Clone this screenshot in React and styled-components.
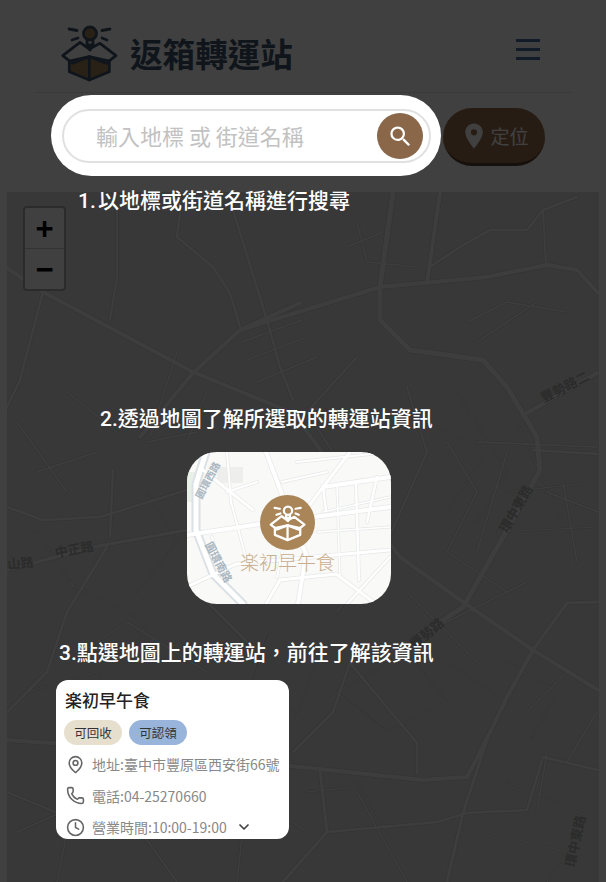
import React from 'react'
import styled, { createGlobalStyle } from 'styled-components'
import { Clock, ChevronDown, MapPin, Phone } from 'lucide-react'
import { MdLocationOn, MdSearch } from 'react-icons/md'

const GlobalStyle = createGlobalStyle`
    html, body {
        margin: 0;
        padding: 0;
        background: #fff;
        font-family: "Noto Sans CJK TC", "Noto Sans", sans-serif;
    }
    * { box-sizing: border-box; }
`

const Page = styled.div`
    position: relative;
    width: 606px;
    height: 882px;
    overflow: hidden;
    display: flex;
    flex-direction: column;
    background: #fff;
`
const Header = styled.header`
    height: 93px;
    margin: 0 34px;
    padding: 14px 32px 0 26px;
    flex-shrink: 0;
    display: flex;
    align-items: center;
    justify-content: space-between;
    border-bottom: 1px solid #e6e6e6;
`
const Brand = styled.div`
    display: flex;
    align-items: center;
    gap: 10px;
`
const BrandName = styled.span`
    font-size: 32.6px;
    font-weight: 700;
    color: #3c566c;
    line-height: 1;
`
const Burger = styled.div`
    width: 24px;
    margin-top: -7px;
    display: flex;
    flex-direction: column;
    gap: 6px;
    span {
        height: 3px;
        background: #4a6fa5;
    }
`
const SearchRow = styled.div`
    height: 99px;
    flex-shrink: 0;
    padding: 2px 0 0 51px;
    display: flex;
    align-items: flex-start;
    gap: 2px;
`
const SearchHighlight = styled.div`
    position: relative;
    z-index: 20;
    width: 390px;
    height: 81px;
    padding: 14px 10px 13px 11px;
    background: #fff;
    border-radius: 41px;
`
const SearchBox = styled.div`
    height: 54px;
    padding: 0 6px 0 32px;
    display: flex;
    align-items: center;
    border: 2px solid #e0e0e0;
    border-radius: 27px;
`
const SearchInput = styled.input`
    flex: 1;
    min-width: 0;
    height: 40px;
    padding: 0 0 2px;
    border: none;
    outline: none;
    background: none;
    font-family: inherit;
    font-size: 22px;
    &::placeholder { color: #c2c2c2; }
`
const SearchButton = styled.button`
    width: 46px;
    height: 46px;
    padding: 0;
    border: none;
    border-radius: 50%;
    background: #8a6748;
    color: #fff;
    display: flex;
    align-items: center;
    justify-content: center;
`
const LocateButton = styled.button`
    width: 102px;
    height: 58px;
    margin-top: 13px;
    padding: 0;
    border: none;
    border-bottom: 3px solid #5a4230;
    border-radius: 29px;
    background: #9a6f4e;
    color: #fff;
    font-family: inherit;
    font-size: 19px;
    display: flex;
    align-items: center;
    justify-content: center;
    gap: 1px;
`
const MapArea = styled.div`
    position: relative;
    flex: 1;
    margin: 0 7px;
    background: #e0e0de;
    overflow: hidden;
    svg { display: block; }
`
const ZoomControl = styled.div`
    position: absolute;
    left: 16px;
    top: 14px;
    width: 43px;
    height: 85px;
    background: #fff;
    border: 2px solid #aaa;
    border-radius: 4px;
    display: flex;
    flex-direction: column;
`
const ZoomButton = styled.div`
    flex: 1;
    display: flex;
    align-items: center;
    justify-content: center;
    font-family: "Liberation Sans", sans-serif;
    font-size: 31px;
    font-weight: 700;
    line-height: 1;
    color: #000;
    & + & { border-top: 1px solid #ccc; }
`
const Overlay = styled.div`
    position: absolute;
    inset: 0;
    z-index: 10;
    background: rgba(0, 0, 0, 0.75);
    display: flex;
    flex-direction: column;
    padding-top: 186px;
`
const StepTitle = styled.h2`
    margin: ${p => p.$top}px 0 0 ${p => p.$left}px;
    font-family: Roboto, "Noto Sans CJK TC", sans-serif;
    font-size: 21px;
    font-weight: 500;
    line-height: 30px;
    word-spacing: -3px;
    color: #fff;
    white-space: nowrap;
`
const Thumb = styled.div`
    position: relative;
    width: 204px;
    height: 152px;
    margin: 18px 0 0 187px;
    border-radius: 30px;
    overflow: hidden;
    background: #f9f9f7;
    svg.roads { display: block; }
`
const Marker = styled.div`
    position: absolute;
    left: 0;
    right: 3px;
    top: 43px;
    display: flex;
    flex-direction: column;
    align-items: center;
`
const MarkerBadge = styled.div`
    width: 55px;
    height: 55px;
    border-radius: 50%;
    background: #a98558;
    display: flex;
    align-items: center;
    justify-content: center;
`
const MarkerName = styled.span`
    margin-top: -2px;
    font-size: 19px;
    font-weight: 300;
    line-height: 28px;
    color: #c9ad8c;
`
const Card = styled.div`
    width: 233px;
    height: 159px;
    margin: 12px 0 0 56px;
    padding: 8px 9px 0 8px;
    background: #fff;
    border-radius: 12px;
    overflow: hidden;
`
const CardTitle = styled.div`
    font-size: 17px;
    font-weight: 500;
    line-height: 24px;
    color: #222;
    margin-left: 1px;
`
const Chips = styled.div`
    display: flex;
    gap: 7px;
    margin-top: 8px;
`
const Chip = styled.span`
    width: 58px;
    height: 25px;
    border-radius: 13px;
    background: ${p => p.$bg};
    font-size: 12.5px;
    line-height: 25px;
    text-align: center;
    color: #333;
`
const InfoRows = styled.div`
    margin-top: 9px;
    display: flex;
    flex-direction: column;
    gap: 11.5px;
`
const InfoRow = styled.div`
    height: 20px;
    display: flex;
    align-items: center;
    gap: 7px;
    padding-left: 2px;
    font-size: 14px;
    line-height: 20px;
    color: #888;
    white-space: nowrap;
    svg { flex-shrink: 0; color: #666; }
`
const Chevron = styled(ChevronDown)`
    margin-left: 2px;
    color: #444 !important;
`

// box with a light bulb, used in the header and on the map marker
const LogoMark = ({ size, stroke, fill, width }) => (
    <svg width={size} height={size} viewBox="10 8 60 60" fill="none" stroke={stroke} strokeWidth={width} strokeLinecap="round" strokeLinejoin="round">
        <path d="M19.3 46 V56.7 L39.3 65 L59.3 56.7 V46 L39.3 41.7 Z" fill={fill} />
        <path d="M30 27.3 L39.3 34 L50 28.3 L66 40.7 L56 48.3 L39.3 41.7 L22.7 48.3 L12.7 40.7 Z" />
        <path d="M39.3 41.7 V65" />
        <circle cx="40" cy="18.5" r="6.5" fill={fill} />
        <path d="M37 25 V30 H43 V25 M37.5 30 L40 35 L42.5 30" />
        <path d="M19 14 L27 15.5 M22 25 L28 23 M60 14 L52 15.5 M57 25 L52 23" />
    </svg>
)

// road centre lines in map coordinates, with their width
const roads = [
    ['M293 111 L233 138 L186 181 L133 245', 4],
    ['M233 138 L373 95 L480 85 L540 73 L570 78 L591 101', 4],
    ['M386 1 L373 95 L373 128 L403 158 L476 168 L500 195 L530 245 L533 278 L500 338 L456 415 L406 448', 5],
    ['M433 1 L420 91', 4],
    ['M423 75 L453 55 L483 38 L520 38 L536 18 L570 5', 2.5],
    ['M536 18 L539 73', 2],
    ['M0 76 L36 100 L186 180 L286 221 L393 365 L456 410 L526 458 L591 498', 4],
    ['M36 100 L26 138 L13 188 L0 215', 2.5],
    ['M110 18 L110 85 L103 128', 2],
    ['M173 21 L170 45 L206 75 L223 101 L233 135', 2.5],
    ['M226 18 L260 128 L273 175 L286 208', 2.5],
    ['M520 221 L590 181', 4],
    ['M526 258 L591 262', 2.5],
    ['M526 458 L500 505 L476 555 L460 585 L416 588 L293 575 L100 555 L0 548', 4],
    ['M480 548 L456 621 L440 690', 3],
    ['M460 621 L520 618 L536 565 L591 578', 2.5],
    ['M526 458 L560 411 L591 410', 3],
    ['M343 471 L410 551 L410 581', 2.5],
    ['M313 578 L320 640 L276 690', 3],
    ['M320 640 L430 630 L460 621', 2.5],
    ['M343 471 L326 520 L286 560', 2.5],
    ['M0 378 L86 355 L180 338', 3],
    ['M106 278 L103 345', 2.5],
    ['M0 315 L36 328 L93 325 L180 298', 2.5],
    ['M143 245 L170 160', 1.5],
    ['M100 355 L60 420 L40 480 L0 520', 2.5],
    ['M180 338 L190 400 L240 450', 2.5],
    ['M120 620 L170 690', 2],
    ['M0 600 L60 625 L120 620 L190 560', 2],
    ['M400 195 L420 260 L380 350 L330 420', 2],
    ['M440 250 L470 300 L440 360 L500 400', 1.5],
    ['M350 165 L300 220 L345 290', 2],
    ['M500 260 L470 360 M470 250 L590 255', 1.5],
    ['M540 300 L591 320 M556 290 L570 370', 1.5],
    ['M250 190 L310 165 M240 168 L300 145 M235 150 L295 128', 1.5],
    ['M420 440 L520 390 M400 400 L470 470', 1.5],
    ['M520 520 L560 480 M530 620 L540 560 M560 570 L590 520', 1.5],
    ['M200 480 L120 430 L60 470', 1.5],
    ['M10 230 L60 300 M30 280 L90 260 M60 200 L110 240', 1.5],
    ['M140 250 L190 240 M200 200 L180 250', 1.5],
    ['M350 30 L360 70 L410 75 M376 40 L340 55', 1.5],
    ['M460 130 L500 110 L560 120 M470 150 L530 110', 1.5],
    ['M300 640 L240 600 L230 690 M350 600 L400 690', 1.5],
    ['M70 590 L50 690 M10 640 L100 600', 1.5],
    ['M420 230 L480 260 L440 320 M450 200 L500 280 L470 330', 1],
    ['M500 300 L590 290 M490 340 L590 335 M510 230 L560 340', 1],
    ['M330 500 L400 460 L440 510 L380 540 Z', 1],
    ['M440 470 L500 510 L470 560 M500 470 L550 500 L525 545', 1],
    ['M350 590 L380 640 M300 600 L350 595', 1],
    ['M20 500 L90 480 L120 530 M60 390 L140 430 L100 520', 1],
    ['M140 300 L170 350 L130 400 M30 340 L70 400', 1],
    ['M260 440 L310 470 L290 520 L240 500 Z', 1],
    ['M480 640 L560 660 L540 690 M500 590 L580 620', 1],
]

const mapLabels = [
    ['豐勢路二', 560, 199, -27],
    ['環中東路', 513, 319, -60],
    ['中正路', 68, 362, -10],
    ['山路', 14, 376, -6],
    ['環中東路', 573, 650, -78],
    ['豐勢路', 423, 445, -40],
]

const thumbRoads = [
    ['M79 0 L96 45 L119 102 L111 152', 4],
    ['M0 83 L73 72 L203 55', 4],
    ['M16 18 L66 58', 3],
    ['M136 35 L203 25', 4],
    ['M136 35 L116 62 M163 0 L136 35', 3],
    ['M136 35 L139 58 M169 32 L172 128', 2.5],
    ['M0 135 L49 112 L203 98', 3],
    ['M79 152 L93 128 L149 122 L189 152', 3],
    ['M203 105 L160 152 M190 25 L180 70', 2.5],
    ['M40 0 L44 50 L60 110 M40 40 L70 30', 2],
    ['M110 10 L203 0 M95 30 L140 20', 2],
    ['M25 85 L38 135 M100 78 L90 125', 2],
    ['M150 35 L153 125 M136 60 L203 45 M130 80 L203 75', 1.5],
]

const App = () => (
    <Page>
        <GlobalStyle />
        <Header>
            <Brand>
                <LogoMark size={60} stroke="#3c566c" fill="#a98558" width={2.8} />
                <BrandName>返箱轉運站</BrandName>
            </Brand>
            <Burger><span /><span /><span /></Burger>
        </Header>
        <SearchRow>
            <SearchHighlight>
                <SearchBox>
                    <SearchInput placeholder="輸入地標 或 街道名稱" />
                    <SearchButton><MdSearch size={27} /></SearchButton>
                </SearchBox>
            </SearchHighlight>
            <LocateButton><MdLocationOn size={30} />定位</LocateButton>
        </SearchRow>
        <MapArea>
            <svg width="592" height="690" viewBox="0 0 592 690" fill="none" strokeLinecap="round" strokeLinejoin="round">
                {roads.map(([d, w], i) => <path key={i} d={d} stroke="#cbcbca" strokeWidth={w + 1.6} />)}
                {roads.map(([d, w], i) => <path key={i} d={d} stroke="#f4f4f4" strokeWidth={w} />)}
                {mapLabels.map(([t, x, y, r], i) => (
                    <text key={i} x={x} y={y} transform={`rotate(${r} ${x} ${y})`} fontSize="13" fontWeight="700" fill="#adadad" stroke="none" textAnchor="middle">{t}</text>
                ))}
            </svg>
            <ZoomControl>
                <ZoomButton>+</ZoomButton>
                <ZoomButton>−</ZoomButton>
            </ZoomControl>
        </MapArea>
        <Overlay>
            <StepTitle $left={78} $top={0}>1. 以地標或街道名稱進行搜尋</StepTitle>
            <StepTitle $left={100} $top={188}>2.透過地圖了解所選取的轉運站資訊</StepTitle>
            <Thumb>
                <svg className="roads" width="204" height="152" viewBox="0 0 204 152" fill="none" strokeLinecap="round" strokeLinejoin="round">
                    <rect x="30" y="15" width="26" height="16" fill="#eeeeec" />
                    <rect x="0" y="20" width="8" height="30" fill="#e9f0e8" />
                    {thumbRoads.map(([d, w], i) => <path key={i} d={d} stroke="#e6e8e8" strokeWidth={w + 1.4} />)}
                    <path d="M19 0 L9 32 L9 78 L26 122 L56 152" stroke="#dbe1e5" strokeWidth="9" />
                    <path d="M19 0 L9 32 L9 78 L26 122 L56 152" stroke="#fff" strokeWidth="5" />
                    {thumbRoads.map(([d, w], i) => <path key={i} d={d} stroke="#fff" strokeWidth={w} />)}
                    <text x="24" y="30" transform="rotate(-62 24 30)" fontSize="10" fontWeight="700" fill="#a9b6c0" textAnchor="middle">圓環西路</text>
                    <text x="28" y="112" transform="rotate(62 28 112)" fontSize="11" fontWeight="700" fill="#a9b6c0" textAnchor="middle">圓環南路</text>
                </svg>
                <Marker>
                    <MarkerBadge><LogoMark size={38} stroke="#fff" fill="none" width={3.6} /></MarkerBadge>
                    <MarkerName>楽初早午食</MarkerName>
                </Marker>
            </Thumb>
            <StepTitle $left={59} $top={34}>3.點選地圖上的轉運站，前往了解該資訊</StepTitle>
            <Card>
                <CardTitle>楽初早午食</CardTitle>
                <Chips>
                    <Chip $bg="#e7dfce">可回收</Chip>
                    <Chip $bg="#98b4da">可認領</Chip>
                </Chips>
                <InfoRows>
                    <InfoRow><MapPin size={19} />地址:臺中市豐原區西安街66號</InfoRow>
                    <InfoRow><Phone size={19} />電話:04-25270660</InfoRow>
                    <InfoRow><Clock size={19} />營業時間:10:00-19:00<Chevron size={16} strokeWidth={2.6} /></InfoRow>
                </InfoRows>
            </Card>
        </Overlay>
    </Page>
)

export default App
